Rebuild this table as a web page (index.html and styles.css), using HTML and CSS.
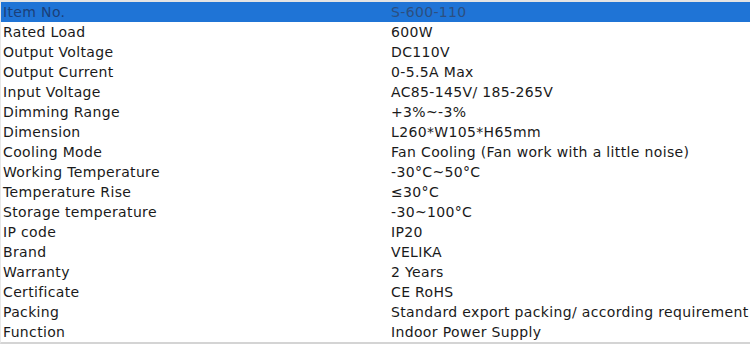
FILE: index.html
```html
<!DOCTYPE html>
<html>
<head>
<meta charset="utf-8">
<link rel="stylesheet" href="styles.css">
</head>
<body>
<div class="frame">
<table class="spec">
<tr class="head"><td class="k">Item No.</td><td class="v">S-600-110</td></tr>
<tr><td class="k">Rated Load</td><td class="v">600W</td></tr>
<tr><td class="k">Output Voltage</td><td class="v">DC110V</td></tr>
<tr><td class="k">Output Current</td><td class="v">0-5.5A Max</td></tr>
<tr><td class="k">Input Voltage</td><td class="v">AC85-145V/ 185-265V</td></tr>
<tr><td class="k">Dimming Range</td><td class="v">+3%~-3%</td></tr>
<tr><td class="k">Dimension</td><td class="v">L260*W105*H65mm</td></tr>
<tr><td class="k">Cooling Mode</td><td class="v">Fan Cooling (Fan work with a little noise)</td></tr>
<tr><td class="k">Working Temperature</td><td class="v">-30°C~50°C</td></tr>
<tr><td class="k">Temperature Rise</td><td class="v">≤30°C</td></tr>
<tr><td class="k">Storage temperature</td><td class="v">-30~100°C</td></tr>
<tr><td class="k">IP code</td><td class="v">IP20</td></tr>
<tr><td class="k">Brand</td><td class="v">VELIKA</td></tr>
<tr><td class="k">Warranty</td><td class="v">2 Years</td></tr>
<tr><td class="k">Certificate</td><td class="v">CE RoHS</td></tr>
<tr><td class="k">Packing</td><td class="v">Standard export packing/ according requirement</td></tr>
<tr><td class="k">Function</td><td class="v">Indoor Power Supply</td></tr>
</table>
</div>
</body>
</html>
```
FILE: styles.css
```css
html, body {
  margin: 0;
  padding: 0;
  background: #ffffff;
}
.frame {
  width: 750px;
  height: 344px;
  box-sizing: border-box;
  border-top: 2px solid #e4e4e4;
  border-left: 1px solid #e8e8e8;
  border-bottom: 2px solid #d4d4d4;
  overflow: hidden;
}
.spec {
  border-collapse: collapse;
  width: 749px;
  font-family: "DejaVu Sans", Verdana, sans-serif;
  font-size: 14px;
  letter-spacing: 0.35px;
  color: #1a1a1a;
  table-layout: fixed;
}
.spec td {
  height: 20px;
  padding: 0;
  line-height: 20px;
  white-space: nowrap;
  overflow: hidden;
}
.spec .k {
  width: 387px;
  padding-left: 2px;
}
.spec .v {
  padding-left: 1px;
}
.spec .head td {
  background: #1f74d6;
  color: #1b3f78;
}
.spec .head .v {
  color: #2c4f80;
}
```
